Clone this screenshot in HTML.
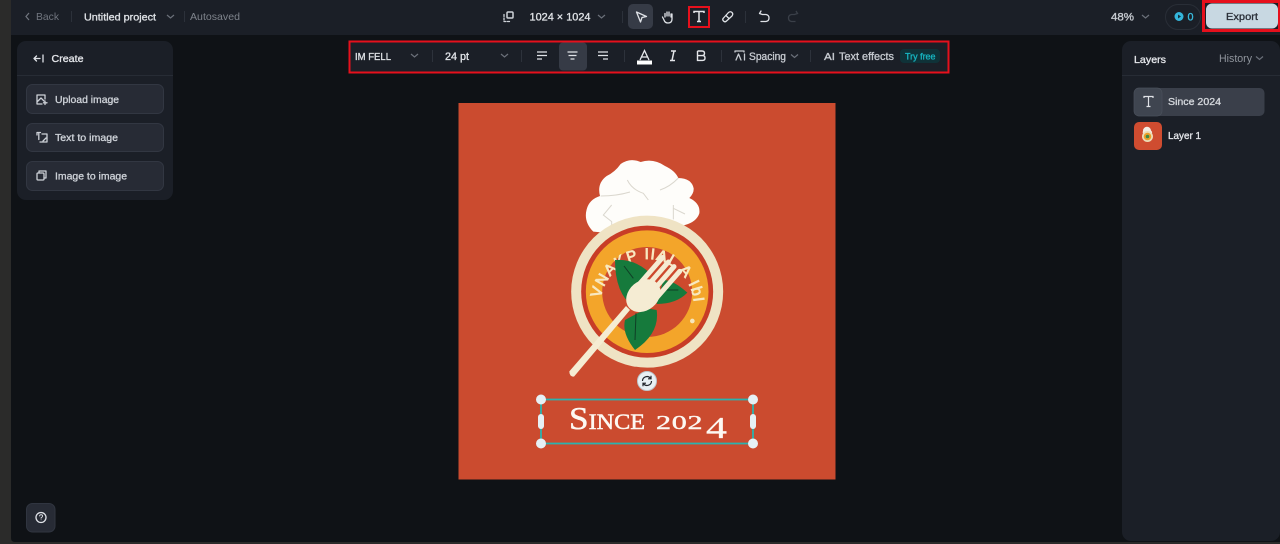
<!DOCTYPE html>
<html><head><meta charset="utf-8"><style>
html,body{margin:0;padding:0;background:#0f1216}
body{width:1280px;height:544px;overflow:hidden;position:relative}
svg{position:absolute;left:0;top:0;filter:blur(.35px)}
text{font-family:"Liberation Sans",sans-serif;font-weight:400}
.m{fill:currentColor;stroke:currentColor;stroke-width:.32}
.i{fill:none;stroke:#dfe2e7;stroke-width:1.3;stroke-linecap:round;stroke-linejoin:round}
</style></head><body>
<svg width="1280" height="544" viewBox="0 0 1280 544">
<rect width="1280" height="544" fill="#0f1216"/>
<rect x="0" y="0" width="1280" height="35" fill="#1b1f27"/>
<path d="M0 0H11V538Q11 542 15 542H1280V544H0Z" fill="#2b2b2a"/>
<path d="M29 13l-3 3.500 3 3.500" fill="none" stroke="#71767f" stroke-width="1.200"/>
<text x="36" y="20" font-size="10.500" textLength="23" lengthAdjust="spacingAndGlyphs" fill="#71767f">Back</text>
<rect x="71" y="11" width="1" height="11" fill="#2c313a"/>
<rect x="184" y="11" width="1" height="11" fill="#2c313a"/>
<text x="190" y="20" font-size="10.500" textLength="50" lengthAdjust="spacingAndGlyphs" fill="#7f848c">Autosaved</text>
<text class="m" x="84" y="20.500" font-size="10.500" textLength="72" lengthAdjust="spacingAndGlyphs" color="#dfe2e6">Untitled project</text>
<path d="M167 15l3.500 3 3.500-3" fill="none" stroke="#6b707a" stroke-width="1.200"/>
<!-- top center -->
<g class="i" style="stroke:#cfd3d9"><rect x="507" y="12" width="6" height="6" rx="1" stroke-width="1.500"/><path d="M504 14.500v7h7" stroke-dasharray="2 1.500"/></g>
<text class="m" x="529.500" y="20.500" font-size="10.800" textLength="61" lengthAdjust="spacingAndGlyphs" color="#dfe2e6">1024 × 1024</text>
<path d="M598 15l3.500 3 3.500-3" fill="none" stroke="#6b707a" stroke-width="1.200"/>
<rect x="622" y="11" width="1" height="12" fill="#2c313a"/>
<rect x="628" y="4" width="25" height="25" rx="5" fill="#363b46"/>
<path class="i" d="M636.500 12l10 4.500-4.500 1-1.500 4.500z"/>
<g class="i"><path d="M665 17v-3.500M667 16v-4M669 16v-4M671 17v-3l1 0v5q0 4-4 4-3 0-4-3l-1.500-3"/></g>
<rect x="689" y="7" width="20" height="20" fill="none" stroke="#e6101c" stroke-width="2"/>
<path d="M694 13v-1.500h10v1.500M699 11.500v10M697 21.500h4" fill="none" stroke="#e4e6ea" stroke-width="1.500"/>
<path class="i" d="M723.500 21q-1.500-1.500 0-3l5-5.500q2-1.500 3.500 0t0 3.500l-5.500 5q-1.500 1.500-3 0zM726 15.500l3 3"/>
<rect x="745" y="11" width="1" height="12" fill="#2c313a"/>
<path class="i" d="M761 11l-1.500 2.500 3 1h3.500q3 .5 3 3.500t-3 3.500h-5"/>
<path d="M796 11l1.500 2.500-3 1h-3q-3 .5-3 3.500t3 3.500h4" fill="none" stroke="#3a3f48" stroke-width="1.300"/>
<!-- top right -->
<text class="m" x="1111" y="20.500" font-size="11" textLength="23" lengthAdjust="spacingAndGlyphs" color="#c9cdd3">48%</text>
<path d="M1142 15l3.500 3 3.500-3" fill="none" stroke="#6b707a" stroke-width="1.200"/>
<rect x="1165.500" y="4.500" width="35" height="25" rx="12.500" fill="#1b1f27" stroke="#292e37"/>
<circle cx="1179" cy="16.500" r="4.500" fill="#34b6dc"/><path d="M1178 14.500l3 2-3 2z" fill="#13323f"/>
<text class="m" x="1187.500" y="20.500" font-size="10.800" color="#39bde0">0</text>
<rect x="1202" y="0" width="78" height="32" fill="#e6101c"/>
<rect x="1205" y="3" width="73" height="26" fill="#1b1f27"/>
<rect x="1206" y="3.500" width="72" height="25" rx="6" fill="#c8d8e2"/>
<text class="m" x="1226" y="20" font-size="10.500" textLength="32" lengthAdjust="spacingAndGlyphs" color="#2a2f38">Export</text>
<!-- left panel -->
<rect x="17" y="41" width="156" height="159" rx="9" fill="#1b1f27"/>
<rect x="17" y="75" width="156" height="1" fill="#272c35"/>
<path class="i" d="M43 55v7M40 58.500h-6M36.500 56l-2.500 2.500 2.500 2.500"/>
<text class="m" x="51.500" y="62" font-size="10.500" textLength="32" lengthAdjust="spacingAndGlyphs" color="#e4e6ea">Create</text>
<g fill="#272b35" stroke="#323742">
<rect x="26.500" y="84.500" width="137" height="29" rx="6"/>
<rect x="26.500" y="123.500" width="137" height="28" rx="6"/>
<rect x="26.500" y="161.500" width="137" height="29" rx="6"/>
</g>
<g class="i" style="stroke:#cdd1d7">
<path d="M45 99v-4h-8v9h5M37 102l4-4 3 3M45 101v3.500M43.500 102.800h3.500"/>
<path d="M37 135v-2.500h3.500M38.800 132.500v7M42 134h5v8h-7M43 141l3-3"/>
<rect x="37" y="173" width="7" height="7" rx="1"/><path d="M39 173v-2h7v7h-2"/>
</g>
<g font-size="10.500" color="#ced2d8">
<text class="m" x="55" y="103" textLength="64" lengthAdjust="spacingAndGlyphs">Upload image</text>
<text class="m" x="55" y="141" textLength="63" lengthAdjust="spacingAndGlyphs">Text to image</text>
<text class="m" x="55" y="179.500" textLength="72" lengthAdjust="spacingAndGlyphs">Image to image</text>
</g>
<rect x="26.500" y="503.500" width="28.500" height="28.500" rx="6" fill="#272b35" stroke="#303540" stroke-width="1"/>
<circle cx="41" cy="517.500" r="5" fill="none" stroke="#dfe2e7" stroke-width="1.300"/>
<path d="M39.500 516.300q.2-1.600 1.600-1.600 1.500 .1 1.500 1.400 0 .9-1.500 1.700v.8M41.100 519.500v.6" fill="none" stroke="#dfe2e7" stroke-width=".9"/>
<!-- text toolbar -->
<rect x="349.500" y="41.500" width="599" height="31" fill="#1b1f27" stroke="#e6101c" stroke-width="2"/>
<text class="m" x="355" y="60" font-size="10.500" textLength="36" lengthAdjust="spacingAndGlyphs" color="#dfe2e6">IM FELL</text>
<path d="M411 54l3.500 3 3.500-3M501 54l3.500 3 3.500-3" fill="none" stroke="#6b707a" stroke-width="1.200"/>
<text class="m" x="445" y="60" font-size="11" textLength="24" lengthAdjust="spacingAndGlyphs" color="#dfe2e6">24 pt</text>
<g fill="#2d323b"><rect x="432" y="50" width="1" height="12"/><rect x="521" y="50" width="1" height="12"/><rect x="624" y="50" width="1" height="12"/><rect x="721" y="50" width="1" height="12"/><rect x="810" y="50" width="1" height="12"/></g>
<rect x="559" y="42.500" width="28" height="28" rx="4" fill="#363b46"/>
<g stroke="#dfe2e7" stroke-width="1.300" fill="none">
<path d="M537 52h10M537 55.500h10M537 59h5"/>
<path d="M567.500 52h10M568.500 55.500h8M570.500 59h4"/>
<path d="M598 52h10M598 55.500h10M603 59h5"/>
</g>
<path d="M640 60l4.500-9.500 4.500 9.500M641.500 57h6" fill="none" stroke="#e8eaee" stroke-width="1.300"/>
<rect x="637" y="60.500" width="15" height="4" fill="#fff"/>
<path d="M671 51h5M670 60.500h5M674 51l-2 9.500" fill="none" stroke="#e4e6ea" stroke-width="1.500"/>
<path d="M697.500 51h4.500q2.500 0 2.500 2.300t-2.500 2.300h-4.500M697.500 55.600h5q2.500 0 2.500 2.400t-2.500 2.400h-5zM697.500 51v9.400" fill="none" stroke="#e4e6ea" stroke-width="1.400"/>
<path class="i" style="stroke:#c6cad0" d="M735 52v-1h9v1M736 60l2.500-6 2.500 6M744.500 54v6"/>
<text class="m" x="749" y="60" font-size="11" textLength="37" lengthAdjust="spacingAndGlyphs" color="#c6cad0">Spacing</text>
<path d="M791 54.500l3.500 3 3.500-3" fill="none" stroke="#6b707a" stroke-width="1.200"/>
<text class="m" x="824" y="60" font-size="10.500" textLength="11" lengthAdjust="spacingAndGlyphs" color="#c6cad0">AI</text>
<text class="m" x="839" y="60" font-size="11" textLength="55" lengthAdjust="spacingAndGlyphs" color="#c6cad0">Text effects</text>
<rect x="900" y="49" width="40" height="14" rx="4" fill="#0f3238"/>
<text class="m" x="905" y="59.500" font-size="9.500" textLength="30.500" lengthAdjust="spacingAndGlyphs" color="#17b4c0">Try free</text>
<!-- right panel -->
<rect x="1122" y="41" width="158" height="500" rx="9" fill="#1b1f27"/>
<rect x="1122" y="75" width="158" height="1" fill="#272c35"/>
<text class="m" x="1134" y="63" font-size="10.500" textLength="32" lengthAdjust="spacingAndGlyphs" color="#e4e6ea">Layers</text>
<text x="1219" y="62" font-size="11" textLength="33" lengthAdjust="spacingAndGlyphs" fill="#8f949c">History</text>
<path d="M1256 56.500l3.500 3 3.500-3" fill="none" stroke="#6b707a" stroke-width="1.200"/>
<rect x="1134" y="88" width="130.500" height="28" rx="5" fill="#3a3f4a"/>
<rect x="1134" y="88" width="28" height="28" rx="5" fill="#3f4550" stroke="#4a505b" stroke-width=".7"/>
<path d="M1144 98v-1.500h9v1.500M1148.500 96.500v10M1146.500 106.500h4" fill="none" stroke="#dfe2e7" stroke-width="1.200"/>
<text class="m" x="1168" y="105" font-size="10.500" textLength="53" lengthAdjust="spacingAndGlyphs" color="#d5d8dd">Since 2024</text>
<rect x="1134" y="122" width="28" height="28" rx="5" fill="#cf4c30"/>
<path d="M1143 131a4 4 0 0 1 8-.5a3 3 0 0 1 1 3h-9a3 3 0 0 1 0-2.500z" fill="#f3ede4"/>
<circle cx="1147.500" cy="136.500" r="5.500" fill="#ecdcb8"/><circle cx="1147.500" cy="136.500" r="3.800" fill="#eaa02a"/><circle cx="1147.500" cy="136.500" r="1.800" fill="#3f8a45"/>
<text class="m" x="1168" y="139" font-size="10.500" textLength="33" lengthAdjust="spacingAndGlyphs" color="#e4e6ea">Layer 1</text>
<!-- canvas -->
<rect x="458.500" y="103" width="377" height="376.500" fill="#cb4b2f"/>
<!-- logo drawn in 3x coordinates -->
<g transform="translate(550 150) scale(.33333)">
<path d="M130 245Q100 215 110 178Q118 148 150 138Q140 100 170 78Q195 66 212 42Q240 22 272 36Q310 24 345 48Q375 62 385 84Q425 85 431 115Q432 130 418 144Q452 160 448 190Q440 215 405 225L300 260Z" fill="#fefdfa"/>
<g fill="none" stroke="#dad7ce" stroke-width="3">
<path d="M232 90Q245 118 280 130L295 150M152 138Q200 138 240 126M385 84Q360 110 330 120M370 165V208M370 175L405 192M185 165L160 195L185 215V240"/>
</g>
<circle cx="291.500" cy="425" r="228" fill="#efe3c4"/>
<circle cx="291.500" cy="425" r="198" fill="#c83d27"/>
<circle cx="291.500" cy="425" r="184" fill="#f3a52a"/>
<circle cx="291.500" cy="426" r="135" fill="#cd4a2d"/>
<defs><path id="arc" d="M152 445A141 141 0 0 1 432 462" fill="none"/></defs>
<text font-size="46" fill="#f8e8c0" stroke="#f8e8c0" stroke-width="2.500"><textPath href="#arc" textLength="425" lengthAdjust="spacing">VNAKP IIAL A IbII</textPath></text>
<circle cx="427" cy="513" r="7" fill="#f6e6bd"/>
<path d="M195 330Q250 325 295 365L250 470Q195 430 195 330Z" fill="#167a3c"/>
<path d="M412 428Q370 390 340 390L320 462Q380 462 412 428Z" fill="#167a3c"/>
<path d="M255 600Q215 550 225 510L290 475L320 480Q330 550 255 600Z" fill="#167a3c"/>
<path d="M222 348L250 385M258 490L255 570M350 420H385" stroke="#0f3f26" stroke-width="3" fill="none"/>
<path d="M58 664L228 468L240 480L72 680Q58 680 58 664Z" fill="#f5ecd3"/>
<g stroke="#f5ecd3" stroke-width="15" stroke-linecap="round">
<path d="M263 408L338 322M280 422L355 336M297 436L372 350M314 450L389 364"/>
</g>
<ellipse cx="280" cy="437" rx="56" ry="44" transform="rotate(-40 280 437)" fill="#f5ecd3"/>
</g>
<!-- rotate handle -->
<circle cx="647" cy="381" r="9.500" fill="#e8f0f4" stroke="#bcc6cc"/>
<path d="M642.500 381a4.500 4.500 0 0 1 8-2.800M651.500 381a4.500 4.500 0 0 1-8 2.800M651 375.800v3h-3M643 386.200v-3h3" fill="none" stroke="#22262c" stroke-width="1.200"/>
<!-- selection -->
<rect x="541" y="399.500" width="212" height="44" fill="none" stroke="#2bb3ae" stroke-width="1.800"/>
<text x="569" y="429" font-size="32" textLength="76" lengthAdjust="spacingAndGlyphs" fill="#fdf8f2" stroke="#fdf8f2" stroke-width=".5" style="font-family:'Liberation Serif',serif;font-variant:small-caps">Since</text>
<text transform="translate(656 429) scale(1.5 1)" x="0 10.500 21" font-size="20" fill="#fdf8f2" stroke="#fdf8f2" stroke-width=".4" style="font-family:'Liberation Serif',serif">202</text>
<text x="706" y="438" font-size="31" textLength="21" lengthAdjust="spacingAndGlyphs" fill="#fdf8f2" stroke="#fdf8f2" stroke-width=".3" style="font-family:'Liberation Serif',serif">4</text>
<g fill="#e6f0f5">
<circle cx="541" cy="399.500" r="5"/><circle cx="753" cy="399.500" r="5"/><circle cx="541" cy="443.500" r="5"/><circle cx="753" cy="443.500" r="5"/>
<rect x="538" y="414" width="6" height="15" rx="3"/><rect x="750" y="414" width="6" height="15" rx="3"/>
</g>
</svg>
</body></html>
